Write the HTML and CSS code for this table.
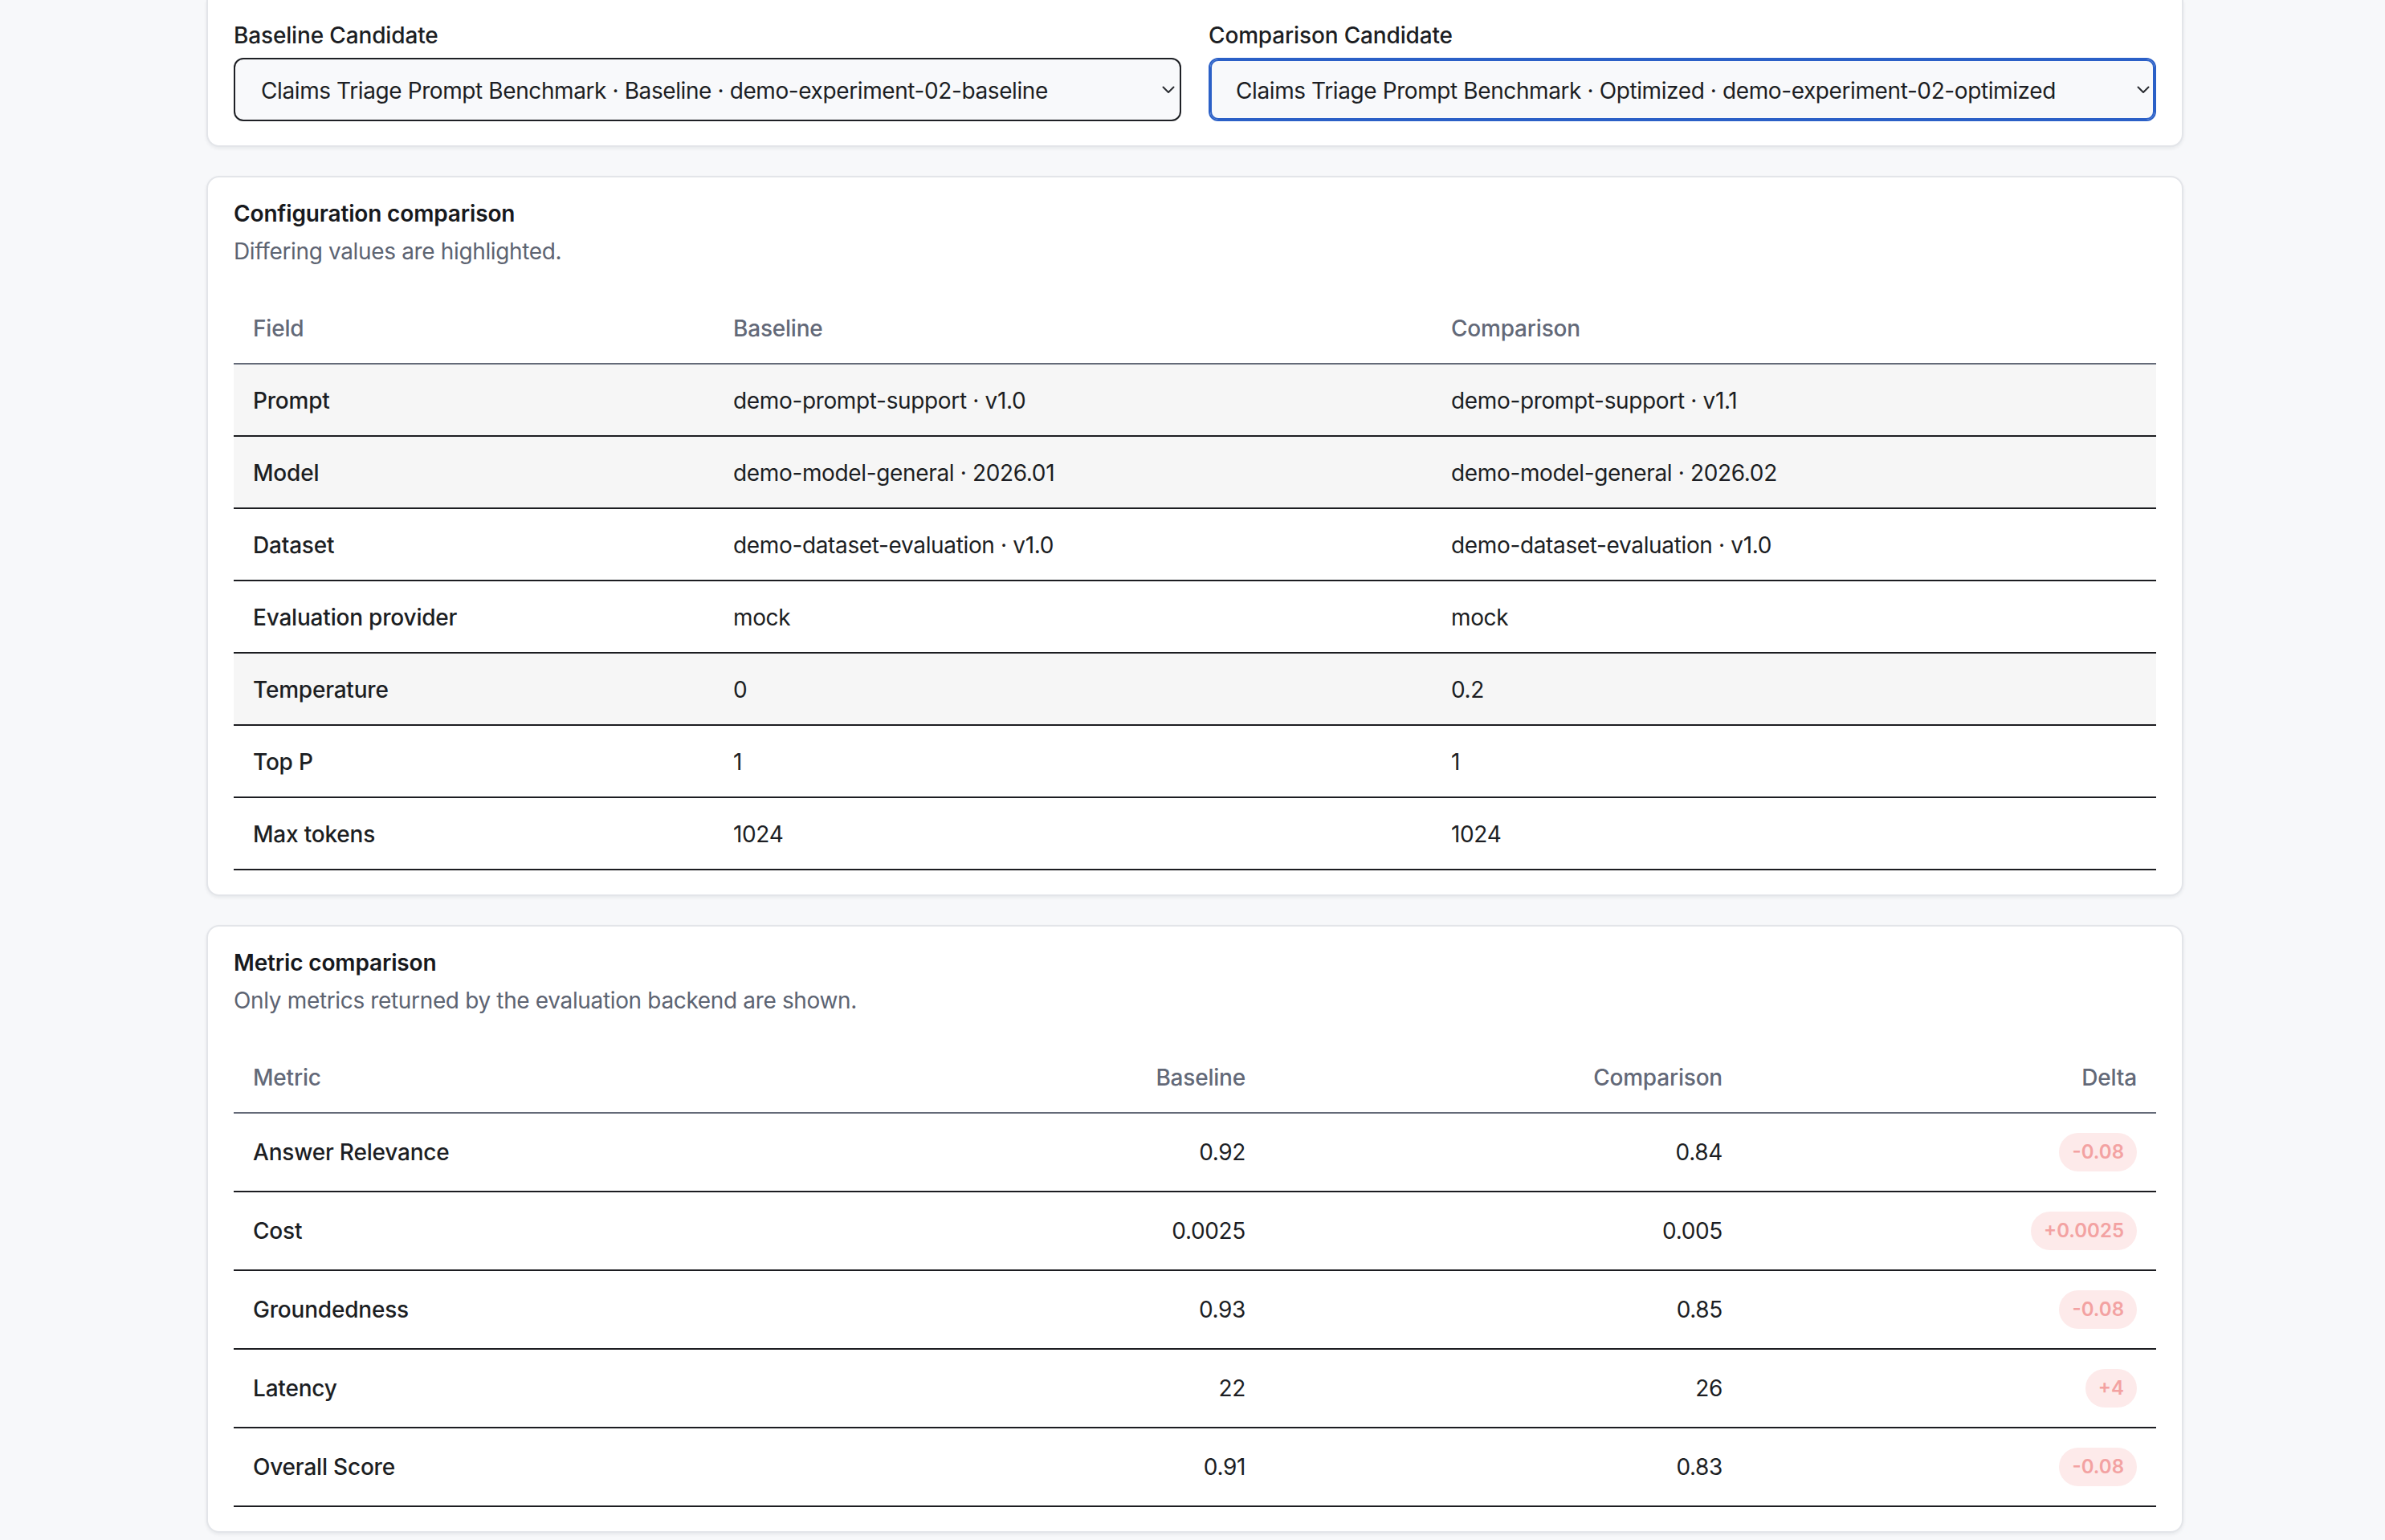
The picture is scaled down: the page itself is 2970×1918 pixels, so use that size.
FILE: index.html
```html
<!DOCTYPE html>
<html lang="en">
<head>
<meta charset="utf-8">
<title>Candidate comparison</title>
<link rel="stylesheet" href="styles.css">
</head>
<body>
<main class="page">
  <section class="card card-top">
    <div class="pickers">
      <div class="picker">
        <label class="picker-label" for="base">Baseline Candidate</label>
        <div class="select-wrap">
          <select id="base" class="select">
            <option>Claims Triage Prompt Benchmark · Baseline · demo-experiment-02-baseline</option>
          </select>
          <svg class="chevron" width="16" height="10" viewBox="0 0 16 10" aria-hidden="true"><path d="M1.5 1.5 L8 8 L14.5 1.5" fill="none" stroke="#2a2c31" stroke-width="2" stroke-linecap="round" stroke-linejoin="round"/></svg>
        </div>
      </div>
      <div class="picker">
        <label class="picker-label" for="comp">Comparison Candidate</label>
        <div class="select-wrap">
          <select id="comp" class="select select-focus">
            <option>Claims Triage Prompt Benchmark · Optimized · demo-experiment-02-optimized</option>
          </select>
          <svg class="chevron" width="16" height="10" viewBox="0 0 16 10" aria-hidden="true"><path d="M1.5 1.5 L8 8 L14.5 1.5" fill="none" stroke="#2a2c31" stroke-width="2" stroke-linecap="round" stroke-linejoin="round"/></svg>
        </div>
      </div>
    </div>
  </section>

  <section class="card">
    <h2 class="card-title">Configuration comparison</h2>
    <p class="card-sub">Differing values are highlighted.</p>
    <table class="table">
      <colgroup>
        <col class="c-field"><col class="c-base"><col class="c-comp">
      </colgroup>
      <thead>
        <tr><th>Field</th><th>Baseline</th><th>Comparison</th></tr>
      </thead>
      <tbody>
        <tr class="diff"><td class="name">Prompt</td><td>demo-prompt-support · v1.0</td><td>demo-prompt-support · v1.1</td></tr>
        <tr class="diff"><td class="name">Model</td><td>demo-model-general · 2026.01</td><td>demo-model-general · 2026.02</td></tr>
        <tr><td class="name">Dataset</td><td>demo-dataset-evaluation · v1.0</td><td>demo-dataset-evaluation · v1.0</td></tr>
        <tr><td class="name">Evaluation provider</td><td>mock</td><td>mock</td></tr>
        <tr class="diff"><td class="name">Temperature</td><td>0</td><td>0.2</td></tr>
        <tr><td class="name">Top P</td><td>1</td><td>1</td></tr>
        <tr><td class="name">Max tokens</td><td>1024</td><td>1024</td></tr>
      </tbody>
    </table>
  </section>

  <section class="card">
    <h2 class="card-title">Metric comparison</h2>
    <p class="card-sub">Only metrics returned by the evaluation backend are shown.</p>
    <table class="table metrics">
      <colgroup>
        <col class="m-name"><col class="m-num"><col class="m-num"><col class="m-delta">
      </colgroup>
      <thead>
        <tr><th>Metric</th><th class="num">Baseline</th><th class="num">Comparison</th><th class="num">Delta</th></tr>
      </thead>
      <tbody>
        <tr><td class="name">Answer Relevance</td><td class="num">0.92</td><td class="num">0.84</td><td class="num"><span class="badge">-0.08</span></td></tr>
        <tr><td class="name">Cost</td><td class="num">0.0025</td><td class="num">0.005</td><td class="num"><span class="badge">+0.0025</span></td></tr>
        <tr><td class="name">Groundedness</td><td class="num">0.93</td><td class="num">0.85</td><td class="num"><span class="badge">-0.08</span></td></tr>
        <tr><td class="name">Latency</td><td class="num">22</td><td class="num">26</td><td class="num"><span class="badge">+4</span></td></tr>
        <tr><td class="name">Overall Score</td><td class="num">0.91</td><td class="num">0.83</td><td class="num"><span class="badge">-0.08</span></td></tr>
      </tbody>
    </table>
  </section>
</main>
</body>
</html>
```

FILE: styles.css
```css
* { box-sizing: border-box; }

html, body {
  margin: 0;
  padding: 0;
  background: #f7f8fa;
}

body {
  font-family: Inter, "Noto Sans", "Liberation Sans", sans-serif;
  font-size: 28px;
  line-height: 40px;
  letter-spacing: -0.35px;
  color: #1c1e23;
}

.page {
  width: 2462px;
  margin: 0 251px 0 257px;
  display: flex;
  flex-direction: column;
  gap: 36px;
  padding-bottom: 40px;
}

.card {
  background: #ffffff;
  border: 2px solid #e3e5e9;
  border-radius: 16px;
  box-shadow: 0 2px 4px rgba(16, 24, 40, 0.07);
  padding: 25px 32px 30px;
}

.card-top {
  border-top: none;
  border-top-left-radius: 0;
  border-top-right-radius: 0;
  padding-top: 24px;
}

.pickers {
  display: grid;
  grid-template-columns: 1fr 1fr;
  gap: 34px;
}

.picker {
  display: flex;
  flex-direction: column;
}

.picker-label {
  font-weight: 500;
  letter-spacing: -0.15px;
  margin-bottom: 8px;
  color: #1c1e23;
}

.select-wrap {
  position: relative;
}

.select {
  -webkit-appearance: none;
  appearance: none;
  width: 100%;
  height: 79px;
  border: 2px solid #1e2025;
  border-radius: 12px;
  background: #f8f9fb;
  padding: 2px 60px 0 32px;
  font-family: inherit;
  font-size: 28px;
  letter-spacing: -0.4px;
  color: #1c1e23;
  outline: none;
}

.select-focus {
  border-color: #2b60c7;
  box-shadow: inset 0 0 0 2px #2b60c7;
}

.chevron {
  position: absolute;
  right: 8px;
  top: 50%;
  margin-top: -5px;
  pointer-events: none;
}

.card-title {
  margin: 0;
  font-size: 28px;
  line-height: 40px;
  font-weight: 600;
  letter-spacing: -0.15px;
  color: #17191d;
}

.card-sub {
  margin: 7px 0 0;
  color: #5d6472;
}

.table {
  width: 100%;
  margin-top: 31px;
  border-collapse: collapse;
  table-layout: fixed;
}

.c-field { width: 598px; }
.c-base { width: 894px; }
.c-comp { width: 902px; }

.m-name { width: 690px; }
.m-num { width: 594px; }
.m-delta { width: 516px; }

.table th {
  text-align: left;
  font-weight: 500;
  letter-spacing: -0.2px;
  color: #636978;
  padding: 25px 24px 23px;
  border-bottom: 2px solid #646a78;
}

.table td {
  padding: 25px 24px 23px;
  border-bottom: 2px solid #1c1d21;
  vertical-align: middle;
}

.table tr.diff td {
  background: #f6f6f6;
}

.table td.name {
  font-weight: 500;
  letter-spacing: -0.2px;
}

.table .num {
  text-align: right;
}

.metrics td {
  padding-top: 24px;
  padding-bottom: 24px;
}

.badge {
  display: inline-block;
  vertical-align: middle;
  padding: 8px 16px;
  border-radius: 999px;
  background: #fdeaea;
  color: #f3a2a2;
  font-size: 24px;
  line-height: 32px;
  font-weight: 600;
  letter-spacing: 0;
}
```
